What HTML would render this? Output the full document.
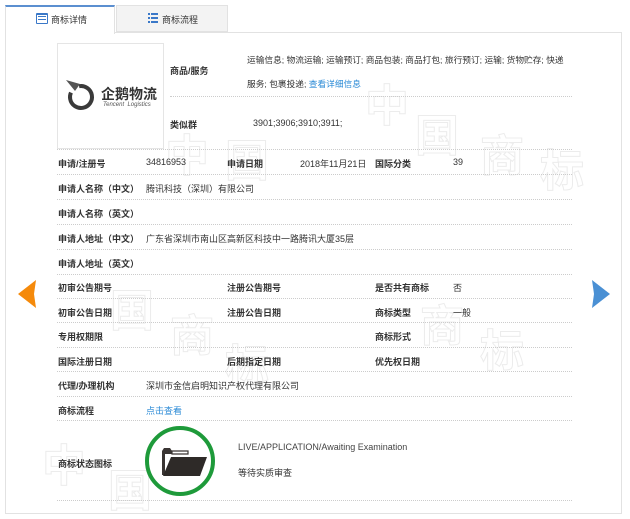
<!DOCTYPE html>
<html><head><meta charset="utf-8"><style>
body{margin:0;width:630px;height:505px;background:#fff;position:relative;overflow:hidden;font-family:"Liberation Sans","Noto Sans CJK SC",sans-serif;font-size:9px;color:#333}
.a{position:absolute;white-space:nowrap}
.l{font-weight:bold;color:#333}
.d{position:absolute;left:57px;width:515px;border-top:1px dotted #ccc;height:0}
.lk{color:#2a8ad6}
.w{position:absolute;font-size:44px;color:transparent;-webkit-text-stroke:1px #ececec;font-weight:bold;z-index:0}
</style></head><body>
<div class="w" style="left:42px;top:430px">中</div><div class="w" style="left:108px;top:455px">国</div>
<div class="w" style="left:165px;top:120px">中</div><div class="w" style="left:225px;top:125px">国</div>
<div class="w" style="left:365px;top:70px">中</div><div class="w" style="left:415px;top:100px">国</div><div class="w" style="left:480px;top:120px">商</div><div class="w" style="left:540px;top:135px">标</div>
<div class="w" style="left:110px;top:275px">国</div><div class="w" style="left:170px;top:300px">商</div><div class="w" style="left:225px;top:330px">标</div>
<div class="w" style="left:420px;top:290px">商</div><div class="w" style="left:480px;top:315px">标</div>
<div class="a" style="left:5px;top:32px;width:615px;height:480px;border:1px solid #e2e2e2"></div>
<div class="a" style="left:5px;top:5px;width:110px;height:29px;background:#fff;border-top:2px solid #5b8fd0;border-left:1px solid #e2e2e2;border-right:1px solid #e2e2e2;box-sizing:border-box;z-index:2"></div>
<div class="a" style="left:116px;top:5px;width:112px;height:27px;background:#f3f3f3;border:1px solid #e2e2e2;box-sizing:border-box"></div>
<div class="a" style="left:36px;top:13px;width:12px;height:11px;border:1.5px solid #3a78c8;border-top-width:2.5px;box-sizing:border-box;border-radius:1px;z-index:3"><div style="margin:1px 1px;border-top:1.5px solid #3a78c8;border-bottom:1.5px solid #3a78c8;height:2px"></div></div>
<div class="a" style="left:51px;top:13px;z-index:3;font-size:9px">商标详情</div>
<div class="a" style="left:148px;top:13px;width:2px;height:10px;background:repeating-linear-gradient(#3a78c8 0 2px,#f3f3f3 2px 4px)"></div>
<div class="a" style="left:151px;top:13px;width:7px;height:10px;background:repeating-linear-gradient(#3a78c8 0 2px,#f3f3f3 2px 4px)"></div>
<div class="a" style="left:162px;top:13px">商标流程</div>

<div class="a" style="left:57px;top:43px;width:107px;height:106px;border:1px solid #e5e5e5;box-sizing:border-box;background:#fff"></div>
<svg class="a" style="left:62px;top:78px" width="34" height="36"><circle cx="19" cy="19" r="11" fill="none" stroke="#3a3a3a" stroke-width="4" stroke-dasharray="58 12" transform="rotate(-100 19 19)"/><path d="M4 2 L18 6 L13 13 Z" fill="#555"/></svg>
<div class="a" style="left:101px;top:84px;font-size:14px;font-weight:bold;color:#333">企鹅物流</div>
<div class="a" style="left:103px;top:102px;font-size:6px;font-style:italic;color:#555">Tencent &nbsp;Logistics</div>

<div class="a l" style="left:170px;top:64px">商品/服务</div>
<div class="a" style="left:247px;top:53px;font-size:8.7px">运输信息; 物流运输; 运输预订; 商品包装; 商品打包; 旅行预订; 运输; 货物贮存; 快递</div>
<div class="a" style="left:247px;top:77px;font-size:8.7px">服务; 包裹投递; <span class="lk">查看详细信息</span></div>
<div class="d" style="left:170px;width:402px;top:96px"></div>
<div class="a l" style="left:170px;top:118px">类似群</div>
<div class="a" style="left:253px;top:118px">3901;3906;3910;3911;</div>
<div class="d" style="left:57px;top:149px"></div>

<div class="a l" style="left:58px;top:157px">申请/注册号</div><div class="a" style="left:146px;top:157px">34816953</div>
<div class="a l" style="left:227px;top:157px">申请日期</div><div class="a" style="left:300px;top:157px">2018年11月21日</div>
<div class="a l" style="left:375px;top:157px">国际分类</div><div class="a" style="left:453px;top:157px">39</div>
<div class="d" style="top:174px"></div>
<div class="a l" style="left:58px;top:182px">申请人名称（中文）</div><div class="a" style="left:146px;top:182px">腾讯科技（深圳）有限公司</div>
<div class="d" style="top:199px"></div>
<div class="a l" style="left:58px;top:207px">申请人名称（英文）</div>
<div class="d" style="top:224px"></div>
<div class="a l" style="left:58px;top:232px">申请人地址（中文）</div><div class="a" style="left:146px;top:232px">广东省深圳市南山区高新区科技中一路腾讯大厦35层</div>
<div class="d" style="top:249px"></div>
<div class="a l" style="left:58px;top:257px">申请人地址（英文）</div>
<div class="d" style="top:274px"></div>
<div class="a l" style="left:58px;top:281px">初审公告期号</div><div class="a l" style="left:227px;top:281px">注册公告期号</div><div class="a l" style="left:375px;top:281px">是否共有商标</div><div class="a" style="left:453px;top:281px">否</div>
<div class="d" style="top:298px"></div>
<div class="a l" style="left:58px;top:306px">初审公告日期</div><div class="a l" style="left:227px;top:306px">注册公告日期</div><div class="a l" style="left:375px;top:306px">商标类型</div><div class="a" style="left:453px;top:306px">一般</div>
<div class="d" style="top:322px"></div>
<div class="a l" style="left:58px;top:330px">专用权期限</div><div class="a l" style="left:375px;top:330px">商标形式</div>
<div class="d" style="top:347px"></div>
<div class="a l" style="left:58px;top:355px">国际注册日期</div><div class="a l" style="left:227px;top:355px">后期指定日期</div><div class="a l" style="left:375px;top:355px">优先权日期</div>
<div class="d" style="top:371px"></div>
<div class="a l" style="left:58px;top:379px">代理/办理机构</div><div class="a" style="left:146px;top:379px">深圳市金信启明知识产权代理有限公司</div>
<div class="d" style="top:396px"></div>
<div class="a l" style="left:58px;top:404px">商标流程</div><div class="a lk" style="left:146px;top:404px">点击查看</div>
<div class="d" style="top:420px"></div>
<div class="a l" style="left:58px;top:457px">商标状态图标</div>
<div class="a" style="left:145px;top:426px;width:70px;height:70px;border:4px solid #1e9a3a;border-radius:50%;box-sizing:border-box;background:#fff"></div>
<svg class="a" style="left:160px;top:445px" width="50" height="34"><path d="M2 6 V30 H5 V9 H12 V6 L10 3 H4 Z" fill="#3a3533"/><path d="M12 6 H28 V9 H12 Z" fill="none" stroke="#3a3533" stroke-width="1.2"/><path d="M3 31 L11 12 H47 L40 31 Z" fill="#2e2a28"/></svg>
<div class="a" style="left:238px;top:442px;font-size:9px;color:#444">LIVE/APPLICATION/Awaiting Examination</div>
<div class="a" style="left:238px;top:466px">等待实质审查</div>
<div class="d" style="top:500px"></div>

<svg class="a" style="left:16px;top:280px" width="22" height="28"><path d="M20 0 L2 14 L20 28 L18 14 Z" fill="#f58a0b"/></svg>
<svg class="a" style="left:590px;top:280px" width="22" height="28"><path d="M2 0 L20 14 L2 28 L4 14 Z" fill="#4a90d4"/></svg>
</body></html>
